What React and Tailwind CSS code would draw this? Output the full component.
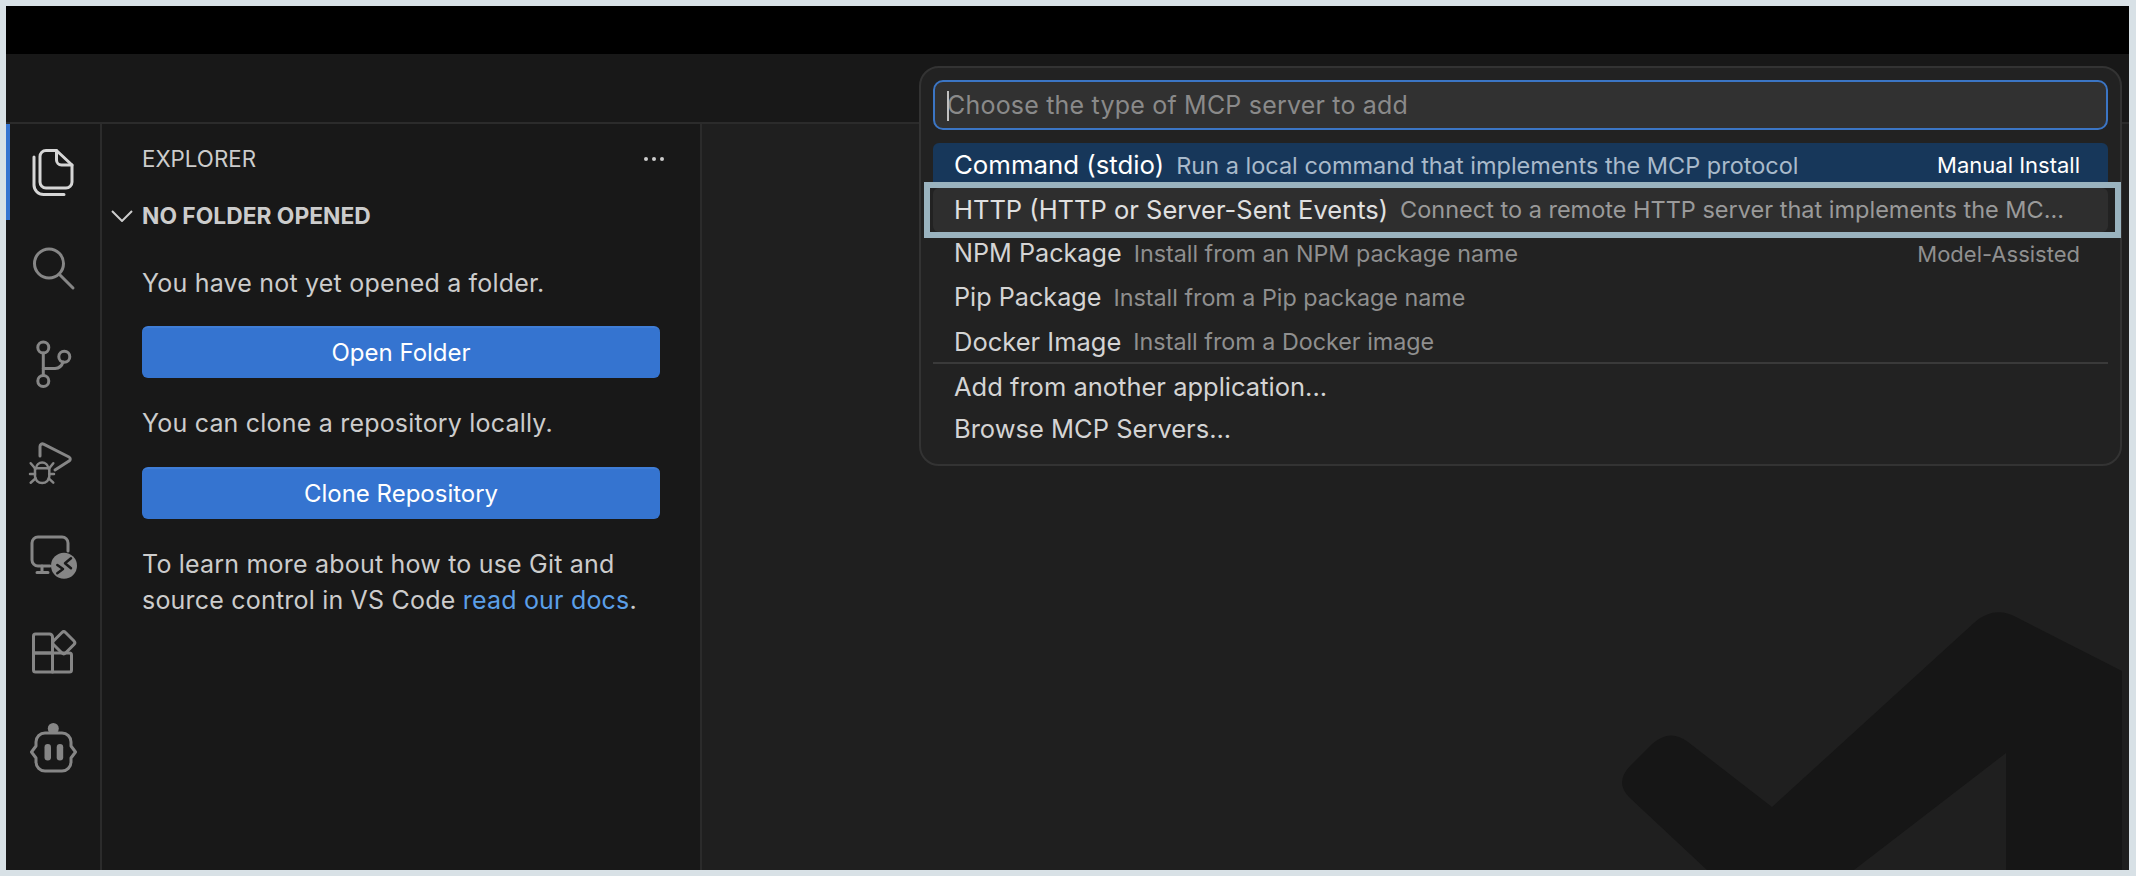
const ICON = "#868686";

function Ico({ children, color = ICON }) {
  return (
    <svg
      width="48"
      height="48"
      viewBox="0 0 48 48"
      fill="none"
      stroke={color}
      strokeWidth="3"
      strokeLinecap="round"
      strokeLinejoin="round"
      className="overflow-visible"
    >
      {children}
    </svg>
  );
}

const activityIcons = [
  <Ico color="#d6d6d6" key="files">
    <path d="M17 2.5h10.5L43 17v17a6 6 0 0 1-6 6H17a6 6 0 0 1-6-6V8.5a6 6 0 0 1 6-6z" />
    <path d="M27.5 2.5V12a5 5 0 0 0 5 5H43" />
    <path d="M5 9v28a9.5 9.5 0 0 0 9.500 9.500H35" />
  </Ico>,
  <Ico key="search">
    <circle cx="20" cy="19.500" r="14.500" />
    <path d="M31 31l13 13" />
  </Ico>,
  <Ico key="git">
    <circle cx="14.300" cy="7.500" r="5.500" />
    <circle cx="35.300" cy="16.700" r="5.500" />
    <circle cx="14.300" cy="41" r="5.500" />
    <path d="M14.300 13v22.500" />
    <path d="M14.300 28.500H26a9 9 0 0 0 8-6.500" />
  </Ico>,
  <Ico key="debug">
    <path d="M11 20V10.500c0-2 1.800-3.200 3.600-2.300L40 21c1.700.9 1.700 3.200 0 4.100L26 34" />
    <path d="M7 32.300a6.200 6.600 0 0 1 12.300 0" strokeWidth="2.500" />
    <path d="M6 32.300h14.300v8a7.150 6.700 0 0 1-14.300 0z" strokeWidth="2.500" />
    <path d="M1.700 27.300L6 32.300M24.300 27.300L20.300 32.300M1 38h5M25 38h-4.700M1.700 46.700L6.700 42.300M24.300 46.700L19.700 42.300" strokeWidth="2.500" />
  </Ico>,
  <Ico key="remote">
    <path d="M21 34H9a6 6 0 0 1-6-6V11a6 6 0 0 1 6-6h24a6 6 0 0 1 6 6v8" />
    <path d="M13 34v6.500M8 40.500h11" />
    <circle cx="35" cy="33.700" r="13" fill={ICON} stroke="none" />
    <path d="M28.300 33l5.700 4-5.700 4.300M42 26.300l-6 5 6 5" stroke="#181818" strokeWidth="2.500" />
  </Ico>,
  <Ico key="extensions">
    <path d="M6.500 6h14a3 3 0 0 1 3 3v16H4.500V8a2 2 0 0 1 2-2z" />
    <path d="M4.500 25h19v19H6.500a2 2 0 0 1-2-2z" />
    <path d="M23.500 25h17a2 2 0 0 1 2 2v15a2 2 0 0 1-2 2h-17z" />
    <path d="M33 4.500a2.500 2.500 0 0 1 3.500 0l8.500 8.500a2.500 2.500 0 0 1 0 3.500L36.500 25a2.500 2.500 0 0 1-3.500 0l-8.500-8.500a2.500 2.500 0 0 1 0-3.500z" />
  </Ico>,
  <Ico key="copilot">
    <path d="M16 9h17a9 9 0 0 1 9 9v4l4.500 6-4.500 6v4a9 9 0 0 1-9 9H16a9 9 0 0 1-9-9v-4l-4.500-6L7 22v-4a9 9 0 0 1 9-9z" />
    <circle cx="24.300" cy="4.500" r="5.500" fill={ICON} stroke="none" />
    <rect x="15.500" y="20" width="6.500" height="16.500" rx="3.250" fill={ICON} stroke="none" />
    <rect x="27.700" y="20" width="6.500" height="16.500" rx="3.250" fill={ICON} stroke="none" />
  </Ico>,
];

function SideButton({ children }) {
  return (
    <button className="h-[52px] w-[518px] rounded-md bg-[#3574d0] border-t-2 border-[#3f7dd6] text-[24px] leading-none text-white">
      {children}
    </button>
  );
}

export default function App() {
  return (
    <div className="relative w-[2136px] h-[876px] overflow-hidden bg-[#d8e1e6] pt-[6px] pb-[6px] pl-[6px] pr-[7px] font-['Inter',sans-serif]">
      <div className="flex flex-col h-full">
        <div className="h-[48px] bg-black" />
        <div className="h-[70px] bg-[#181818] border-b-2 border-[#2b2b2b]" />

        <div className="flex flex-1 min-h-0">
          {/* activity bar */}
          <div className="relative w-[96px] shrink-0 bg-[#181818] border-r-2 border-[#2b2b2b] flex flex-col items-center gap-12 pt-6">
            <div className="absolute left-0 top-0 w-1 h-[96px] bg-[#3574d0]" />
            {activityIcons}
          </div>

          {/* sidebar */}
          <div className="w-[600px] shrink-0 bg-[#181818] border-r-2 border-[#2b2b2b] pl-[40px] text-[#cccccc]">
            <div className="flex items-center justify-between h-[70px] pr-[36px]">
              <span className="text-[22.300px] leading-none">EXPLORER</span>
              <svg width="20" height="4" viewBox="0 0 20 4" fill="#cccccc">
                <circle cx="2" cy="2" r="2" />
                <circle cx="10" cy="2" r="2" />
                <circle cx="18" cy="2" r="2" />
              </svg>
            </div>
            <div className="relative flex items-center h-[44px] text-[22.800px] font-bold leading-none">
              <svg className="absolute left-[-31px]" width="22" height="12" viewBox="0 0 22 12" fill="none" stroke="#cccccc" strokeWidth="2">
                <path d="M1 1l10 10L21 1" />
              </svg>
              NO FOLDER OPENED
            </div>
            <p className="mt-[27px] text-[25px] tracking-[0.2px] leading-9">You have not yet opened a folder.</p>
            <div className="mt-[25px]"><SideButton>Open Folder</SideButton></div>
            <p className="mt-[27px] text-[25px] tracking-[0.2px] leading-9">You can clone a repository locally.</p>
            <div className="mt-[26px]"><SideButton>Clone Repository</SideButton></div>
            <p className="mt-[27px] text-[25px] tracking-[0.2px] leading-9">
              To learn more about how to use Git and
              <br />
              source control in VS Code <span className="text-[#5b9fe8]">read our docs</span>.
            </p>
          </div>

          {/* editor */}
          <div className="relative flex-1 bg-[#1f1f1f]" />
        </div>
      </div>

      {/* VS Code watermark */}
      <svg className="absolute left-0 top-0" width="2136" height="876" viewBox="0 0 2136 876" fill="#161616">
        <path d="M1975 622 Q1995 605 2018 618 L2122 671 V870 H2006 V753 L1854 870 H1707 L1630 798 Q1614 783 1630 766 L1652 744 Q1670 728 1688 742 L1772 807 Z" />
      </svg>

      {/* quick pick */}
      <div className="absolute left-[919px] top-[66px] w-[1203px] h-[400px] rounded-[20px] border-2 border-[#333333] bg-[#222222] px-3 pt-3">
        <div className="relative flex items-center h-[50px] rounded-[10px] border-2 border-[#3b75c4] bg-[#313131] pl-[12px] pt-[2px] text-[25px] tracking-[0.2px] text-[#8a8a8a]">
          <span className="absolute left-[12px] top-[9px] w-[2px] h-[30px] bg-[#c0c0c0]" />
          Choose the type of MCP server to add
        </div>

        <div className="mt-[13px]">
          <div className="flex items-center justify-between h-[45px] pl-[21px] pr-[28px] rounded-md bg-[#17375a]">
            <div className="flex items-center gap-3">
              <span className="text-[25.800px] text-white">Command (stdio)</span>
              <span className="text-[23.500px] text-[#a9bacb]">Run a local command that implements the MCP protocol</span>
            </div>
            <span className="text-[22px] text-white">Manual Install</span>
          </div>
          <div className="flex items-center gap-3 h-[44px] pl-[21px] rounded-md bg-[#2e2e2e]">
            <span className="text-[25.500px] text-[#e0e0e0]">HTTP (HTTP or Server-Sent Events)</span>
            <span className="text-[23.500px] text-[#9a9a9a]">Connect to a remote HTTP server that implements the MC...</span>
          </div>
          <div className="flex items-center justify-between h-[44px] pl-[21px] pr-[28px]">
            <div className="flex items-center gap-3">
              <span className="text-[25.200px] text-[#d4d4d4]">NPM Package</span>
              <span className="text-[23.300px] text-[#8f8f8f]">Install from an NPM package name</span>
            </div>
            <span className="text-[22px] text-[#8f8f8f]">Model-Assisted</span>
          </div>
          <div className="flex items-center gap-3 h-[44px] pl-[21px]">
            <span className="text-[25.200px] text-[#d4d4d4]">Pip Package</span>
            <span className="text-[23.300px] text-[#8f8f8f]">Install from a Pip package name</span>
          </div>
          <div className="flex items-center gap-3 h-[44px] pl-[21px]">
            <span className="text-[25.500px] text-[#d4d4d4]">Docker Image</span>
            <span className="text-[23.300px] text-[#8f8f8f]">Install from a Docker image</span>
          </div>
          <div className="-mt-[2px] h-[2px] bg-[#3a3a3a]" />
          <div className="pt-[2px]">
            <div className="flex items-center h-[42px] pl-[21px] text-[25.500px] text-[#d4d4d4]">Add from another application...</div>
            <div className="flex items-center h-[42px] pl-[21px] text-[25.500px] text-[#d4d4d4]">Browse MCP Servers...</div>
          </div>
        </div>

        {/* highlight annotation */}
        <div className="absolute left-[3px] top-[114px] w-[1197px] h-[56px] border-[6px] border-[#9ab3bf]" />
      </div>
    </div>
  );
}
